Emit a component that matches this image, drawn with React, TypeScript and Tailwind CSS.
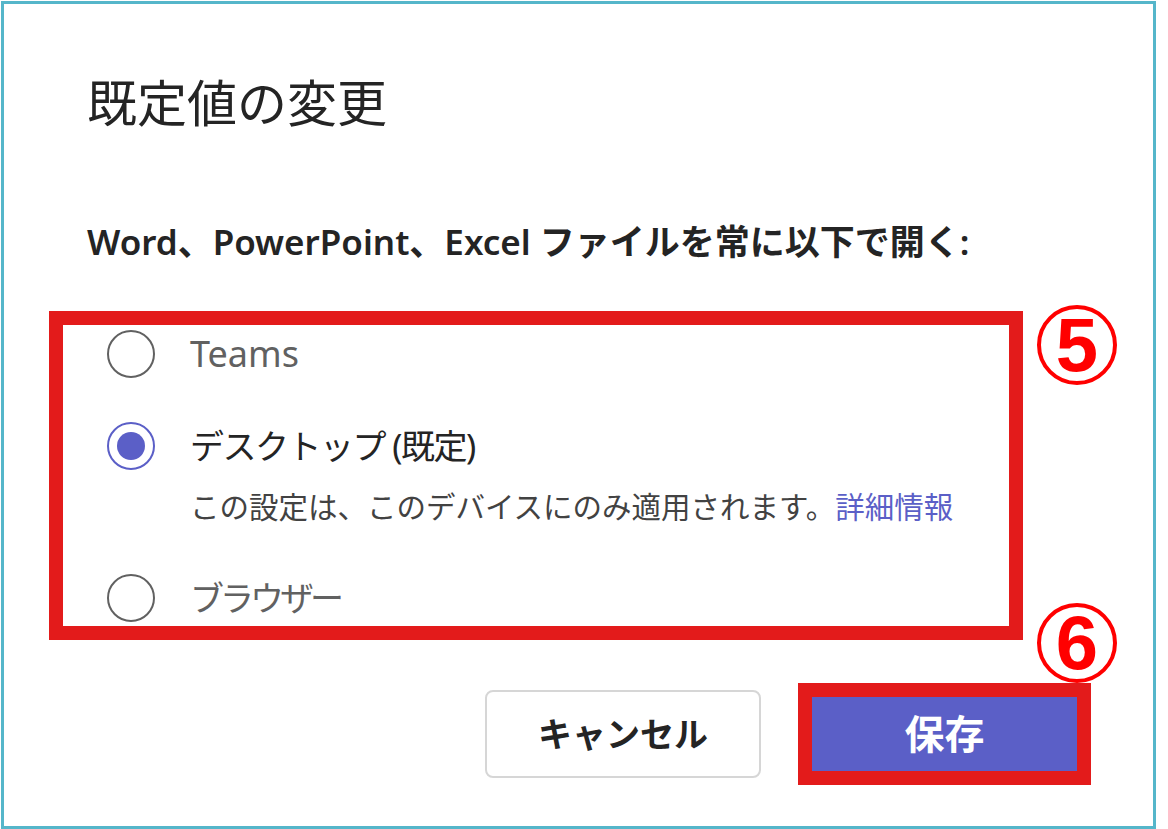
import React from 'react';

const jp = "font-['Noto_Sans','Noto_Sans_CJK_JP',sans-serif]";

function Radio({ checked }: { checked?: boolean }) {
  if (checked) {
    return (
      <span className="flex h-[48px] w-[48px] shrink-0 items-center justify-center rounded-full border-[2px] border-[#5b5fc7]">
        <span className="h-[28px] w-[28px] rounded-full bg-[#5b5fc7]" />
      </span>
    );
  }
  return <span className="block h-[48px] w-[48px] shrink-0 rounded-full border-[2px] border-[#616161]" />;
}

function Marker({ n, top }: { n: string; top: string }) {
  return (
    <div
      className={`absolute left-[1033px] ${top} flex h-[80px] w-[80px] items-center justify-center rounded-full border-[4px] border-[#ff0000]`}
    >
      <span className="font-['Liberation_Sans',Arial,sans-serif] text-[76px] font-bold leading-none text-[#ff0000]">
        {n}
      </span>
    </div>
  );
}

export default function App() {
  return (
    <div className={`h-[829px] w-[1168px] bg-white pl-[1px] pt-[1px] ${jp}`}>
      <div className="relative h-[828px] w-[1155px] border-[3px] border-[#55b6ca]">
        <h1 className="ml-[83px] mt-[67px] text-[50px] font-normal leading-[64px] text-[#242424]">
          既定値の変更
        </h1>

        <p className="ml-[83px] mt-[83px] text-[35px] font-semibold leading-[48px] text-[#242424]">
          Word、PowerPoint、Excel ファイルを常に以下で開く:
        </p>

        <div className="ml-[45px] mt-[45px] w-[974px] border-[14px] border-[#e31b1b] pb-[4px] pl-[44px] pt-[5px]">
          <div className="flex items-center gap-[35px]">
            <Radio />
            <span className="text-[36px] leading-[48px] text-[#616161]">Teams</span>
          </div>

          <div className="mt-[44px] flex items-start gap-[35px]">
            <Radio checked />
            <div>
              <div className="text-[34px] leading-[48px] tracking-[-1.5px] text-[#242424]">デスクトップ (既定)</div>
              <div className="mt-[17px] text-[29.5px] leading-[40px] text-[#424242]">
                この設定は、このデバイスにのみ適用されます。<span className="text-[#5b5fc7]">詳細情報</span>
              </div>
            </div>
          </div>

          <div className="mt-[47px] flex items-center gap-[35px]">
            <Radio />
            <span className="text-[34px] leading-[48px] tracking-[-4px] text-[#616161]">ブラウザー</span>
          </div>
        </div>

        <div className="mt-[43px] flex items-center justify-end gap-[37px] pr-[62px]">
          <button className="flex h-[88px] w-[276px] items-center justify-center rounded-[8px] border-[2px] border-[#d6d6d6] bg-white text-[34px] font-bold text-[#242424]">
            キャンセル
          </button>
          <div className="border-[14px] border-[#e31b1b]">
            <button className="flex h-[74px] w-[265px] items-center justify-center bg-[#5b5fc7] text-[40px] font-bold text-white">
              保存
            </button>
          </div>
        </div>

        <Marker n="5" top="top-[301px]" />
        <Marker n="6" top="top-[599px]" />
      </div>
    </div>
  );
}
